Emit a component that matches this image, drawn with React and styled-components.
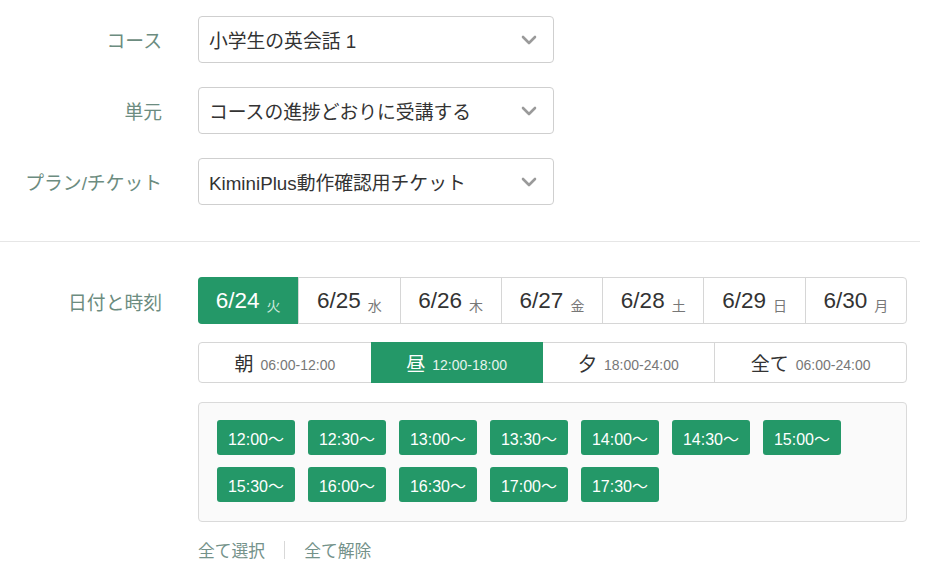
import React, { useState } from 'react';
import styled, { createGlobalStyle } from 'styled-components';

const GREEN = '#249868';

const GlobalStyle = createGlobalStyle`
  body {
    margin: 0;
    background: #fff;
    font-family: "Liberation Sans", "Noto Sans CJK JP", sans-serif;
    color: #333;
  }
`;

const Page = styled.div`
  width: 941px;
  padding-top: 16px;
`;

const Row = styled.div`
  display: grid;
  grid-template-columns: 162px 1fr;
  column-gap: 36px;
  align-items: ${p => (p.$top ? 'start' : 'center')};
  margin-bottom: ${p => p.$mb || 0}px;
`;

const Label = styled.div`
  text-align: right;
  font-size: 18.8px;
  color: #6c8c80;
  padding-top: ${p => p.$pt || 0}px;
`;

const SelectBox = styled.div`
  width: 356px;
  height: 47px;
  box-sizing: border-box;
  border: 1px solid #cfcfcf;
  border-radius: 4px;
  display: flex;
  align-items: center;
  justify-content: space-between;
  padding: 0 16px 0 10px;
  font-size: 18.8px;
  color: #333;
`;

const Chevron = () => (
  <svg width="16" height="10" viewBox="0 0 16 10">
    <path d="M2 2 L8 8 L14 2" fill="none" stroke="#9a9a9a" strokeWidth="2.6" strokeLinecap="round" strokeLinejoin="round" />
  </svg>
);

const Divider = styled.hr`
  border: 0;
  border-top: 1px solid #e6e6e6;
  width: 920px;
  margin: 36px 0 35px;
`;

const Section = styled.div`
  width: 709px;
`;

const DateTabs = styled.div`
  display: flex;
  height: 47px;
  border: 1px solid #d6d6d6;
  border-radius: 4px;
  box-sizing: border-box;
`;

const DateTab = styled.div`
  flex: 1;
  display: flex;
  align-items: center;
  justify-content: center;
  gap: 7px;
  margin: -1px 0;
  border-left: ${p => (p.$first || p.$active ? '0' : '1px solid #d6d6d6')};
  background: ${p => (p.$active ? GREEN : 'transparent')};
  border-radius: ${p => (p.$active ? '4px 0 0 4px' : '0')};
  margin-left: ${p => (p.$first ? '-1px' : '0')};
  color: ${p => (p.$active ? '#fff' : '#333')};
  cursor: pointer;
`;

const DateNum = styled.span`
  font-size: 22.5px;
`;

const Week = styled.span`
  font-size: 14px;
  margin-top: 8px;
  color: ${p => (p.$active ? '#cfe9dd' : '#777')};
`;

const PeriodTabs = styled.div`
  display: flex;
  height: 41px;
  margin-top: 18px;
  border: 1px solid #d6d6d6;
  border-radius: 4px;
  box-sizing: border-box;
`;

const PeriodTab = styled.div`
  flex: 1 1 auto;
  display: flex;
  align-items: center;
  justify-content: center;
  gap: 7px;
  margin: -1px 0;
  border-left: ${p => (p.$first || p.$active || p.$afterActive ? '0' : '1px solid #d6d6d6')};
  background: ${p => (p.$active ? GREEN : 'transparent')};
  color: ${p => (p.$active ? '#fff' : '#333')};
  cursor: pointer;
`;

const Kanji = styled.span`
  font-size: 19px;
`;

const Range = styled.span`
  font-size: 14px;
  margin-top: 5px;
  color: ${p => (p.$active ? '#e6f3ed' : '#777')};
`;

const SlotPanel = styled.div`
  margin-top: 19px;
  background: #fafafa;
  border: 1px solid #dadada;
  border-radius: 4px;
  box-sizing: border-box;
  height: 120px;
  padding: 17px 18px;
  display: flex;
  flex-wrap: wrap;
  align-content: flex-start;
  gap: 12px 13px;
`;

const Slot = styled.button`
  width: 78px;
  height: 35px;
  border: 0;
  border-radius: 3px;
  background: ${GREEN};
  color: #fff;
  font-family: inherit;
  font-size: 16px;
  padding: 0;
  cursor: pointer;
`;

const Links = styled.div`
  display: flex;
  align-items: center;
  margin-top: 16px;
  font-size: 16.8px;
  color: #74928a;
`;

const Sep = styled.span`
  width: 1px;
  height: 18px;
  background: #d8d8d8;
  margin: 0 19px 0 19px;
`;

const dates = [
  ['6/24', '火'], ['6/25', '水'], ['6/26', '木'], ['6/27', '金'],
  ['6/28', '土'], ['6/29', '日'], ['6/30', '月'],
];

const periods = [
  ['朝', '06:00-12:00'], ['昼', '12:00-18:00'], ['夕', '18:00-24:00'], ['全て', '06:00-24:00'],
];

const slots = [
  '12:00', '12:30', '13:00', '13:30', '14:00', '14:30', '15:00',
  '15:30', '16:00', '16:30', '17:00', '17:30',
];

export default function App() {
  const [date, setDate] = useState(0);
  const [period, setPeriod] = useState(1);

  return (
    <Page>
      <GlobalStyle />
      <Row $mb={24}>
        <Label>コース</Label>
        <SelectBox>小学生の英会話 1<Chevron /></SelectBox>
      </Row>
      <Row $mb={24}>
        <Label>単元</Label>
        <SelectBox>コースの進捗どおりに受講する<Chevron /></SelectBox>
      </Row>
      <Row>
        <Label>プラン/チケット</Label>
        <SelectBox>KiminiPlus動作確認用チケット<Chevron /></SelectBox>
      </Row>

      <Divider />

      <Row $top>
        <Label $pt={11}>日付と時刻</Label>
        <Section>
          <DateTabs>
            {dates.map(([d, w], i) => (
              <DateTab
                key={d}
                $first={i === 0}
                $active={i === date}
                onClick={() => setDate(i)}
              >
                <DateNum>{d}</DateNum>
                <Week $active={i === date}>{w}</Week>
              </DateTab>
            ))}
          </DateTabs>

          <PeriodTabs>
            {periods.map(([k, r], i) => (
              <PeriodTab
                key={k}
                $first={i === 0}
                $active={i === period}
                $afterActive={i === period + 1}
                onClick={() => setPeriod(i)}
              >
                <Kanji>{k}</Kanji>
                <Range $active={i === period}>{r}</Range>
              </PeriodTab>
            ))}
          </PeriodTabs>

          <SlotPanel>
            {slots.map(s => (
              <Slot key={s}>{s}〜</Slot>
            ))}
          </SlotPanel>

          <Links>
            <span>全て選択</span>
            <Sep />
            <span>全て解除</span>
          </Links>
        </Section>
      </Row>
    </Page>
  );
}
